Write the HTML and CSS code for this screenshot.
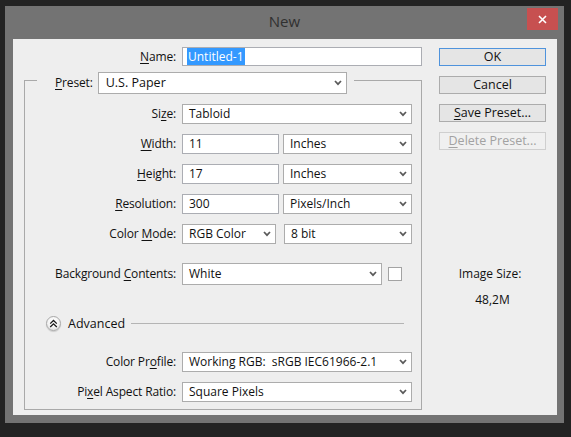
FILE: index.html
```html
<!DOCTYPE html>
<html>
<head>
<meta charset="utf-8">
<link rel="stylesheet" href="styles.css">
</head>
<body>
<div class="window">
  <div class="titlebar">
    <div class="tb-side"></div>
    <div class="title">New</div>
    <div class="tb-side tb-right">
      <div class="close"><svg width="9" height="9" viewBox="0 0 9 9"><path d="M1 1 L8 8 M8 1 L1 8" stroke="#fff" stroke-width="1.6" fill="none"/></svg></div>
    </div>
  </div>
  <div class="client">
    <div class="main">
      <div class="name-row">
        <div class="label"><u>N</u>ame:</div>
        <div class="input name-input"><span class="sel">Untitled-1</span></div>
      </div>
      <fieldset class="group">
        <legend class="legend">
          <span class="label"><u>P</u>reset:</span>
          <div class="select preset"><span>U.S. Paper</span><svg class="chev" width="8" height="6" viewBox="0 0 8 6"><path d="M1 1 L4 4.2 L7 1" stroke="#5a5a5a" stroke-width="1.7" fill="none"/></svg></div>
        </legend>
        <div class="rows">
          <div class="row">
            <div class="label">Si<u>z</u>e:</div>
            <div class="ctrl"><div class="select full"><span>Tabloid</span><svg class="chev" width="8" height="6" viewBox="0 0 8 6"><path d="M1 1 L4 4.2 L7 1" stroke="#5a5a5a" stroke-width="1.7" fill="none"/></svg></div></div>
          </div>
          <div class="row">
            <div class="label"><u>W</u>idth:</div>
            <div class="ctrl gap4"><div class="input num">11</div><div class="select unit"><span>Inches</span><svg class="chev" width="8" height="6" viewBox="0 0 8 6"><path d="M1 1 L4 4.2 L7 1" stroke="#5a5a5a" stroke-width="1.7" fill="none"/></svg></div></div>
          </div>
          <div class="row">
            <div class="label"><u>H</u>eight:</div>
            <div class="ctrl gap4"><div class="input num">17</div><div class="select unit"><span>Inches</span><svg class="chev" width="8" height="6" viewBox="0 0 8 6"><path d="M1 1 L4 4.2 L7 1" stroke="#5a5a5a" stroke-width="1.7" fill="none"/></svg></div></div>
          </div>
          <div class="row">
            <div class="label"><u>R</u>esolution:</div>
            <div class="ctrl gap4"><div class="input num">300</div><div class="select unit"><span>Pixels/Inch</span><svg class="chev" width="8" height="6" viewBox="0 0 8 6"><path d="M1 1 L4 4.2 L7 1" stroke="#5a5a5a" stroke-width="1.7" fill="none"/></svg></div></div>
          </div>
          <div class="row">
            <div class="label">Color <u>M</u>ode:</div>
            <div class="ctrl gap8"><div class="select mode"><span>RGB Color</span><svg class="chev" width="8" height="6" viewBox="0 0 8 6"><path d="M1 1 L4 4.2 L7 1" stroke="#5a5a5a" stroke-width="1.7" fill="none"/></svg></div><div class="select bits"><span>8 bit</span><svg class="chev" width="8" height="6" viewBox="0 0 8 6"><path d="M1 1 L4 4.2 L7 1" stroke="#5a5a5a" stroke-width="1.7" fill="none"/></svg></div></div>
          </div>
          <div class="row bg-row">
            <div class="label">Background <u>C</u>ontents:</div>
            <div class="ctrl gap6"><div class="select bgsel"><span>White</span><svg class="chev" width="8" height="6" viewBox="0 0 8 6"><path d="M1 1 L4 4.2 L7 1" stroke="#5a5a5a" stroke-width="1.7" fill="none"/></svg></div><div class="check"></div></div>
          </div>
          <div class="advanced">
            <div class="adv-btn"><svg width="9" height="9" viewBox="0 0 9 9"><path d="M1.2 4.6 L4.5 1.5 L7.8 4.6 M1.2 8 L4.5 4.9 L7.8 8" stroke="#1a1a1a" stroke-width="1.3" fill="none"/></svg></div>
            <div class="adv-label">Advanced</div>
            <div class="adv-line"></div>
          </div>
          <div class="row">
            <div class="label">Color Pr<u>o</u>file:</div>
            <div class="ctrl"><div class="select full"><span>Working RGB:&nbsp; sRGB IEC61966-2.1</span><svg class="chev" width="8" height="6" viewBox="0 0 8 6"><path d="M1 1 L4 4.2 L7 1" stroke="#5a5a5a" stroke-width="1.7" fill="none"/></svg></div></div>
          </div>
          <div class="row">
            <div class="label">Pi<u>x</u>el Aspect Ratio:</div>
            <div class="ctrl"><div class="select full"><span>Square Pixels</span><svg class="chev" width="8" height="6" viewBox="0 0 8 6"><path d="M1 1 L4 4.2 L7 1" stroke="#5a5a5a" stroke-width="1.7" fill="none"/></svg></div></div>
          </div>
        </div>
      </fieldset>
    </div>
    <div class="side">
      <div class="btn default">OK</div>
      <div class="btn">Cancel</div>
      <div class="btn"><u>S</u>ave Preset...</div>
      <div class="btn disabled"><u>D</u>elete Preset...</div>
      <div class="img-size">Image Size:</div>
      <div class="img-val">48,2M</div>
    </div>
  </div>
</div>
</body>
</html>
```

FILE: styles.css
```css
html, body {
  margin: 0;
  padding: 0;
  background: #232323;
  font-family: "Open Sans", "Noto Sans", "Liberation Sans", sans-serif;
  font-size: 12px;
  color: #111111;
}

.window {
  margin: 6px 0 0 5px;
  width: 559px;
  height: 417px;
  background: #737373;
  display: flex;
  flex-direction: column;
}

.titlebar {
  height: 33px;
  display: grid;
  grid-template-columns: 1fr auto 1fr;
  align-items: start;
}

.title {
  padding-top: 5px;
  font-size: 15px;
  line-height: 20px;
  color: #303030;
}

.tb-right {
  display: flex;
  justify-content: flex-end;
}

.close {
  margin: 2px 6px 0 0;
  width: 31px;
  height: 22px;
  background: #c75050;
  display: flex;
  align-items: center;
  justify-content: center;
}

.client {
  flex: 1;
  margin: 0 7px 8px 8px;
  background: #eeeeee;
  display: flex;
  padding: 8px 0 0 11px;
}

.main {
  width: 398px;
}

.label {
  text-align: right;
  line-height: 18px;
  white-space: nowrap;
  letter-spacing: -0.15px;
}

u {
  text-decoration: underline;
  text-underline-offset: 2px;
}

.name-row {
  display: grid;
  grid-template-columns: 152px 240px;
  column-gap: 6px;
  align-items: center;
}

.input {
  box-sizing: border-box;
  height: 20px;
  border: 1px solid #abadb3;
  background: #fff;
  padding-left: 6px;
  line-height: 18px;
  white-space: nowrap;
}

.name-input {
  height: 19px;
  line-height: 17px;
  padding-left: 4px;
}

.sel {
  background: #3399ff;
  color: #fff;
  padding: 0 1px;
}

.group {
  margin: 0;
  padding: 0 0 7px 0;
  border: 1px solid #a9a9a9;
  width: 396px;
  min-width: 0;
}

.legend {
  margin-left: 12px;
  padding: 6px 7px 0 18px;
  display: flex;
  align-items: center;
  gap: 5px;
}

.legend .label {
  text-align: left;
}

.select {
  box-sizing: border-box;
  height: 20px;
  border: 1px solid #acacac;
  background: #fff;
  padding: 0 4px 0 6px;
  display: flex;
  align-items: center;
  justify-content: space-between;
  line-height: 18px;
  white-space: nowrap;
}

.preset {
  width: 249px;
  height: 22px;
  padding-left: 7px;
  font-size: 12.5px;
}

.rows {
  padding-top: 10px;
  display: flex;
  flex-direction: column;
  gap: 10px;
}

.row {
  display: grid;
  grid-template-columns: 151px 230px;
  column-gap: 6px;
  align-items: center;
}

.ctrl {
  display: flex;
  align-items: center;
}

.gap4 { gap: 4px; }
.gap6 { gap: 6px; }
.gap8 { gap: 8px; }

.full { width: 230px; }
.num { width: 97px; }
.unit { width: 129px; }
.mode { width: 94px; }
.bits { width: 128px; }
.bgsel { width: 200px; height: 22px; }

.bg-row {
  margin-top: 9px;
}

.check {
  width: 14px;
  height: 14px;
  box-sizing: border-box;
  border: 1px solid #a3a3a3;
  background: #fff;
}

.advanced {
  margin-top: 21px;
  margin-bottom: 11px;
  height: 15px;
  display: flex;
  align-items: center;
  padding-left: 21px;
  padding-right: 17px;
}

.adv-btn {
  width: 15px;
  height: 15px;
  box-sizing: border-box;
  border-radius: 50%;
  border: 1px solid #a8a8a8;
  background: radial-gradient(circle at 50% 35%, #ffffff 0%, #f4f4f4 50%, #d9d9d9 100%);
  display: flex;
  align-items: center;
  justify-content: center;
  box-shadow: 0 1px 1px rgba(0,0,0,0.15);
}

.adv-label {
  margin-left: 7px;
  line-height: 15px;
  font-size: 12.5px;
}

.adv-line {
  flex: 1;
  margin-left: 6px;
  height: 1px;
  background: #b4b4b4;
}

.side {
  margin-left: 17px;
  width: 107px;
  display: flex;
  flex-direction: column;
  gap: 10px;
  padding-top: 1px;
}

.btn {
  box-sizing: border-box;
  height: 18px;
  border: 1px solid #acacac;
  background: #e5e5e5;
  text-align: center;
  line-height: 16px;
  font-size: 12.5px;
}

.btn.default {
  border-color: #4f93dc;
}

.btn.disabled {
  border-color: #cfcfcf;
  background: #f0f0f0;
  color: #a2a2a2;
}

.img-size {
  margin-top: 106px;
  text-align: center;
  line-height: 16px;
  padding-right: 5px;
}

.img-val {
  text-align: center;
  line-height: 16px;
}
```
